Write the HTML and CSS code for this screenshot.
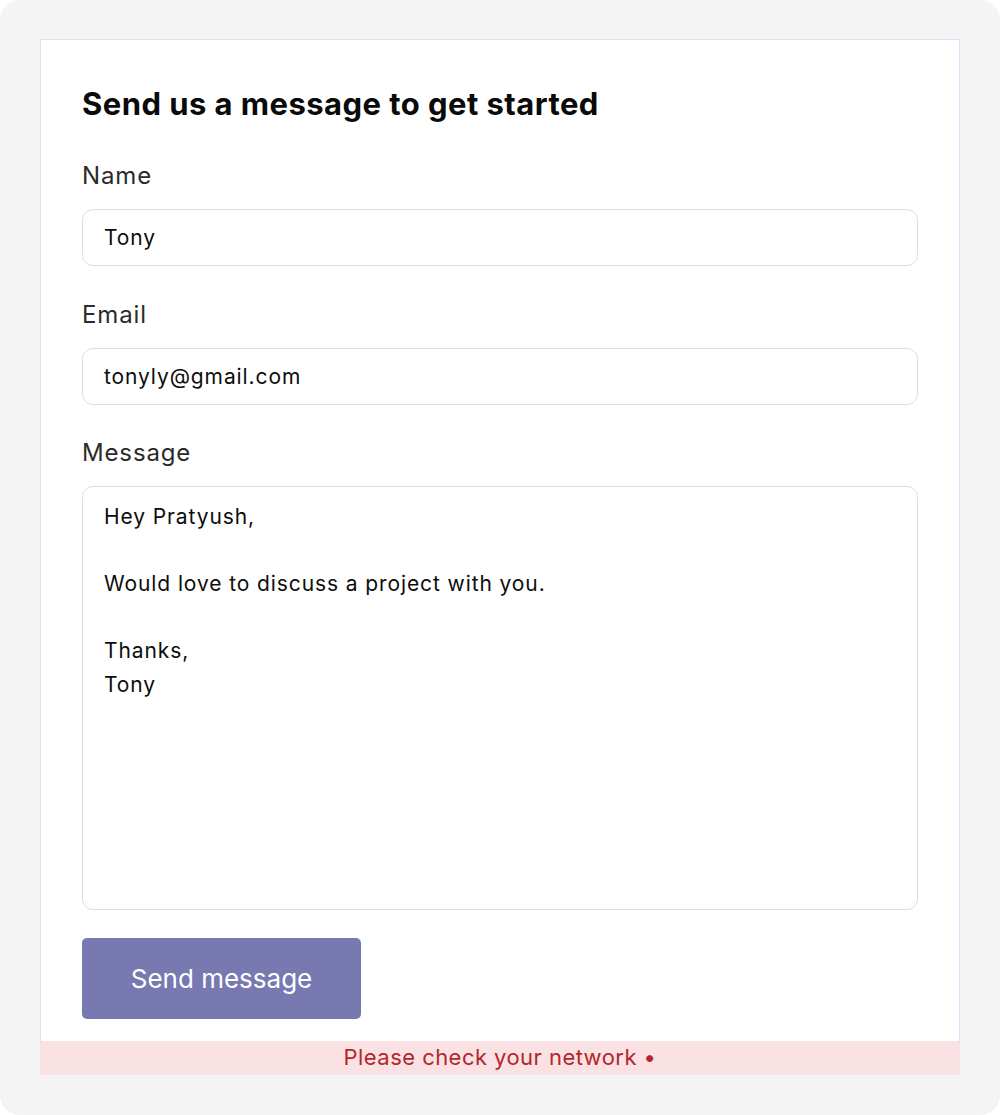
FILE: index.html
```html
<!DOCTYPE html>
<html lang="en">
<head>
<meta charset="utf-8">
<title>Contact</title>
<link rel="stylesheet" href="styles.css">
</head>
<body>
<div class="frame">
  <div class="card">
    <form class="form">
      <h1 class="title">Send us a message to get started</h1>
      <div class="field">
        <label class="label" for="name">Name</label>
        <input class="input" id="name" type="text" value="Tony">
      </div>
      <div class="field field-tight">
        <label class="label" for="email">Email</label>
        <input class="input" id="email" type="email" value="tonyly@gmail.com">
      </div>
      <div class="field field-last">
        <label class="label" for="msg">Message</label>
        <textarea class="input textarea" id="msg">Hey Pratyush,

Would love to discuss a project with you.

Thanks,
Tony</textarea>
      </div>
      <button class="button" type="button">Send message</button>
    </form>
    <div class="error">Please check your network •</div>
  </div>
</div>
</body>
</html>
```

FILE: styles.css
```css
html, body {
  margin: 0;
  padding: 0;
  background: #ffffff;
}
body {
  font-family: Inter, "Liberation Sans", sans-serif;
}
.frame {
  width: 1000px;
  height: 1115px;
  box-sizing: border-box;
  background: #f4f4f5;
  border-radius: 20px;
  padding: 39px 40px 0;
}
.card {
  background: #ffffff;
  border: 1px solid #dedef8;
  border-bottom: none;
}
.form {
  display: flex;
  flex-direction: column;
  padding: 46px 41px 22px;
}
.title {
  margin: 0 0 39px;
  font-size: 31px;
  line-height: 36px;
  font-weight: 700;
  color: #0a0a0a;
  letter-spacing: 0.45px;
}
.field {
  display: flex;
  flex-direction: column;
  gap: 18px;
  margin-bottom: 34px;
}
.field-tight {
  margin-bottom: 33px;
}
.field-last {
  margin-bottom: 28px;
}
.label {
  font-size: 24px;
  line-height: 30px;
  color: #2b2b2b;
  letter-spacing: 0.85px;
}
.input {
  box-sizing: border-box;
  height: 57px;
  width: 100%;
  margin: 0;
  padding: 0 21px;
  border: 1px solid #dcdcf0;
  border-radius: 11px;
  font-family: Inter, "Liberation Sans", sans-serif;
  font-size: 21px;
  letter-spacing: 0.9px;
  color: #0d0d0d;
  background: #ffffff;
  outline: none;
}
.textarea {
  height: 424px;
  padding: 13px 21px;
  line-height: 33.6px;
  resize: none;
  overflow: hidden;
}
.button {
  align-self: flex-start;
  width: 279px;
  height: 81px;
  border: none;
  border-radius: 5px;
  background: #7879b1;
  color: #ffffff;
  font-family: Inter, "Liberation Sans", sans-serif;
  font-size: 26px;
  cursor: pointer;
}
.error {
  height: 34px;
  margin: 0 -1px;
  background: #fae2e4;
  color: #b3272a;
  font-size: 22px;
  line-height: 33px;
  letter-spacing: 0.45px;
  text-align: center;
}
```
